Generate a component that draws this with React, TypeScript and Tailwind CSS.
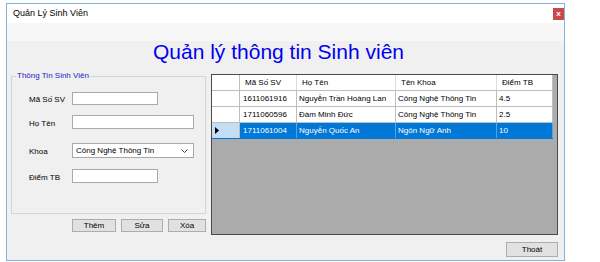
import React from "react";

const rows = [
  { id: "1611061916", name: "Nguyễn Trần Hoàng Lan", khoa: "Công Nghệ Thông Tin", diem: "4.5", sel: false },
  { id: "1711060596", name: "Đàm Minh Đức", khoa: "Công Nghệ Thông Tin", diem: "2.5", sel: false },
  { id: "1711061004", name: "Nguyễn Quốc An", khoa: "Ngôn Ngữ Anh", diem: "10", sel: true },
];

function Field({ label, children, mt, h }: { label: string; children: React.ReactNode; mt: string; h: string }) {
  return (
    <div className={`flex items-center ${mt} ${h}`}>
      <div className="w-[43px] pl-[0px] pt-[3px] text-[8px] leading-[10px] text-black">{label}</div>
      {children}
    </div>
  );
}

function Btn({ label, w }: { label: string; w: string }) {
  return (
    <div className={`${w} h-[13px] border border-[#adadad] bg-[#e1e1e1] flex items-center justify-center text-[8px] leading-[10px] text-black`}>
      {label}
    </div>
  );
}

export default function App() {
  return (
    <div className="w-[600px] h-[262px] bg-white" style={{ fontFamily: '"Liberation Sans", Arial, sans-serif' }}>
      <div className="ml-[6px] mt-[3px] w-[559px] h-[258px] border border-[#86b1d8] flex flex-col">
        {/* title bar */}
        <div className="h-[19px] bg-white flex items-start">
          <div className="pl-[6px] pt-[4px] text-[9px] leading-[11px] text-black">Quản Lý Sinh Viên</div>
          <div className="ml-auto mt-[4px] w-[11px] h-[12px] bg-[#c94a4a] flex items-center justify-center text-white text-[8px] leading-[8px] font-bold">
            x
          </div>
        </div>
        {/* content */}
        <div className="h-[237px] bg-[#f0f0f0] flex flex-col">
          <div className="h-[51px] pt-[17px] pl-[146px] bg-[linear-gradient(to_bottom,#f7f7f7_18px,#f0f0f0_18px)]">
            <div className="text-[21px] leading-[24px] text-[#0000ee] whitespace-nowrap">Quản lý thông tin Sinh viên</div>
          </div>
          <div className="h-[161px] flex items-start">
            {/* left column */}
            <div className="ml-[4px] w-[195px] flex flex-col">
              <div className="relative mt-[2px] h-[138px] border border-[#d5d5d5] pl-[17px]">
                <div className="absolute left-[4px] top-[-6px] px-[1px] bg-[#f0f0f0] text-[8px] leading-[10px] text-[#2222c4]">
                  Thông Tin Sinh Viên
                </div>
                <Field label="Mã Số SV" mt="mt-[15px]" h="h-[13px]">
                  <div className="w-[86px] h-[13px] bg-white border border-[#a9a9a9]" />
                </Field>
                <Field label="Họ Tên" mt="mt-[10px]" h="h-[14px]">
                  <div className="w-[122px] h-[14px] bg-white border border-[#a9a9a9]" />
                </Field>
                <Field label="Khoa" mt="mt-[14px]" h="h-[15px]">
                  <div className="w-[122px] h-[15px] bg-white border border-[#a9a9a9] flex items-center pl-[3px] pr-[5px] text-[8px] leading-[10px] text-black">
                    <span>Công Nghệ Thông Tin</span>
                    <svg className="ml-auto" width="7" height="4" viewBox="0 0 7 4">
                      <polyline points="0.5,0.5 3.5,3.5 6.5,0.5" fill="none" stroke="#444" strokeWidth="1" />
                    </svg>
                  </div>
                </Field>
                <Field label="Điểm TB" mt="mt-[11px]" h="h-[14px]">
                  <div className="w-[86px] h-[14px] bg-white border border-[#a9a9a9]" />
                </Field>
              </div>
              <div className="mt-[5px] flex pl-[61px] gap-[5px]">
                <Btn label="Thêm" w="w-[44px]" />
                <Btn label="Sửa" w="w-[42px]" />
                <Btn label="Xóa" w="w-[38px]" />
              </div>
            </div>
            {/* grid */}
            <div className="ml-[5px] w-[347px] h-[161px] border border-[#4a4a4a] bg-[#ababab] flex flex-col text-[8px] leading-[10px]">
              <div className="flex h-[16px] bg-white border-b border-[#bdbdbd] w-[341px]">
                <div className="w-[28px] border-r border-[#bdbdbd]" />
                <div className="w-[57px] border-r border-[#dcdcdc] pl-[5px] flex items-center">Mã Số SV</div>
                <div className="w-[99px] border-r border-[#dcdcdc] pl-[5px] flex items-center">Họ Tên</div>
                <div className="w-[101px] border-r border-[#dcdcdc] pl-[5px] flex items-center">Tên Khoa</div>
                <div className="w-[56px] border-r border-[#bdbdbd] pl-[5px] flex items-center">Điểm TB</div>
              </div>
              {rows.map((r) => (
                <div key={r.id} className={`flex h-[16px] border-b w-[341px] ${r.sel ? "border-[#0078d7]" : "border-[#bdbdbd]"}`}>
                  <div className={`w-[28px] border-r border-[#bdbdbd] flex items-center pl-[3px] ${r.sel ? "bg-[#c4dff5]" : "bg-white"}`}>
                    {r.sel && (
                      <svg width="4" height="7" viewBox="0 0 4 7">
                        <polygon points="0,0 4,3.5 0,7" fill="#000" />
                      </svg>
                    )}
                  </div>
                  <div className={`w-[57px] border-r flex items-center pl-[3px] ${r.sel ? "bg-[#0078d7] text-white border-[#5aa2e0]" : "bg-white text-black border-[#bdbdbd]"}`}>{r.id}</div>
                  <div className={`w-[99px] border-r flex items-center pl-[2px] whitespace-nowrap ${r.sel ? "bg-[#0078d7] text-white border-[#5aa2e0]" : "bg-white text-black border-[#bdbdbd]"}`}>{r.name}</div>
                  <div className={`w-[101px] border-r flex items-center pl-[2px] whitespace-nowrap ${r.sel ? "bg-[#0078d7] text-white border-[#5aa2e0]" : "bg-white text-black border-[#bdbdbd]"}`}>{r.khoa}</div>
                  <div className={`w-[56px] border-r flex items-center pl-[2px] ${r.sel ? "bg-[#0078d7] text-white border-[#5aa2e0]" : "bg-white text-black border-[#bdbdbd]"}`}>{r.diem}</div>
                </div>
              ))}
            </div>
          </div>
          <div className="mt-[7px] flex justify-end pr-[6px]">
            <div className="w-[52px] h-[15px] border border-[#adadad] bg-[#e1e1e1] flex items-center justify-center text-[8px] leading-[10px] text-black">
              Thoát
            </div>
          </div>
        </div>
      </div>
    </div>
  );
}
